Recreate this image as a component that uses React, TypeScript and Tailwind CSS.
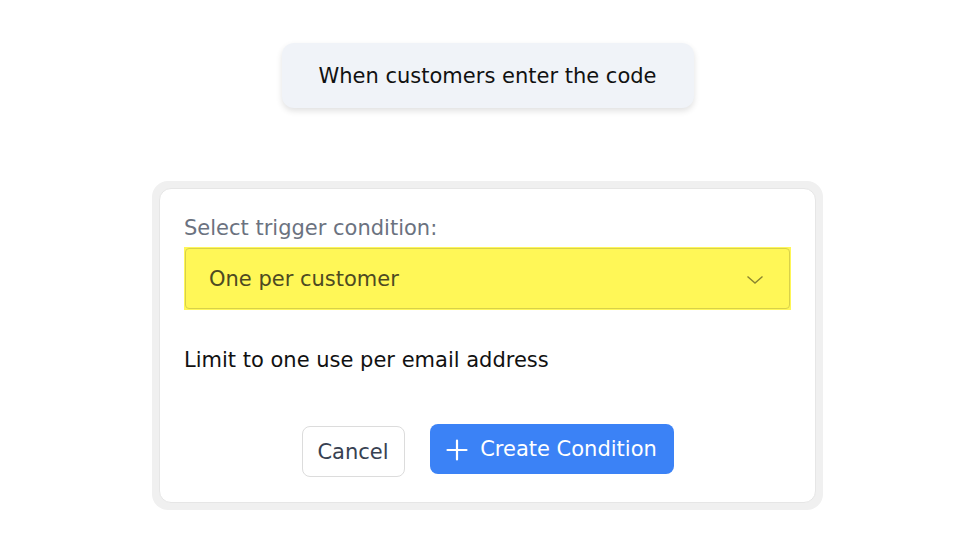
import React from 'react';

const font = { fontFamily: '"DejaVu Sans", "Noto Sans", sans-serif' };

const ChevronDown = () => (
  <svg width="18" height="10" viewBox="0 0 18 10" fill="none" stroke="#8a8530" strokeWidth="1.4">
    <path d="M1.5 1.5 L9 8 L16.5 1.5" />
  </svg>
);

const PlusIcon = () => (
  <svg width="22" height="22" viewBox="0 0 22 22" fill="none" stroke="white" strokeWidth="2.2" strokeLinecap="round">
    <path d="M11 1.5 V20.5 M1.5 11 H20.5" />
  </svg>
);

export default function App() {
  return (
    <div className="w-[978px] h-[550px] bg-white" style={font}>
      <div className="w-[975px] flex flex-col items-center">
        <div className="mt-[43px] h-[65px] w-[412px] pt-[3px] flex items-center justify-center rounded-xl bg-[#f0f3f8] shadow-[0_3px_6px_rgba(0,0,0,0.12)] text-[21px] text-[#111]">
          When customers enter the code
        </div>

        <div className="mt-[73px] w-[671px] rounded-2xl bg-[#f0f0f0] p-[7px]">
          <div className="rounded-xl bg-white border border-[#e6e6e6] px-6 pt-[25px] pb-[25px]">
            <div className="text-[21px] leading-7 text-[#6b7280]">Select trigger condition:</div>
            <div className="mt-[5px] bg-[#fff757] p-px">
              <div className="h-[61px] rounded border border-[#d8d14a] flex items-center justify-between pl-[23px] pr-[25px] pt-[3px]">
                <span className="text-[21px] text-[#4d4a22]">One per customer</span>
                <ChevronDown />
              </div>
            </div>
            <div className="mt-[36px] text-[21px] leading-7 text-[#111]">Limit to one use per email address</div>
            <div className="mt-[50px] flex items-start justify-center gap-[25px]">
              <button className="mt-[2px] h-[51px] w-[103px] pt-[2px] rounded-lg border border-[#dcdcdc] bg-white text-[21px] text-[#374151]">
                Cancel
              </button>
              <button className="h-[50px] w-[244px] pt-[2px] rounded-lg bg-[#3b82f6] text-white text-[21px] flex items-center justify-center gap-3">
                <PlusIcon />
                <span>Create Condition</span>
              </button>
            </div>
          </div>
        </div>
      </div>
    </div>
  );
}
